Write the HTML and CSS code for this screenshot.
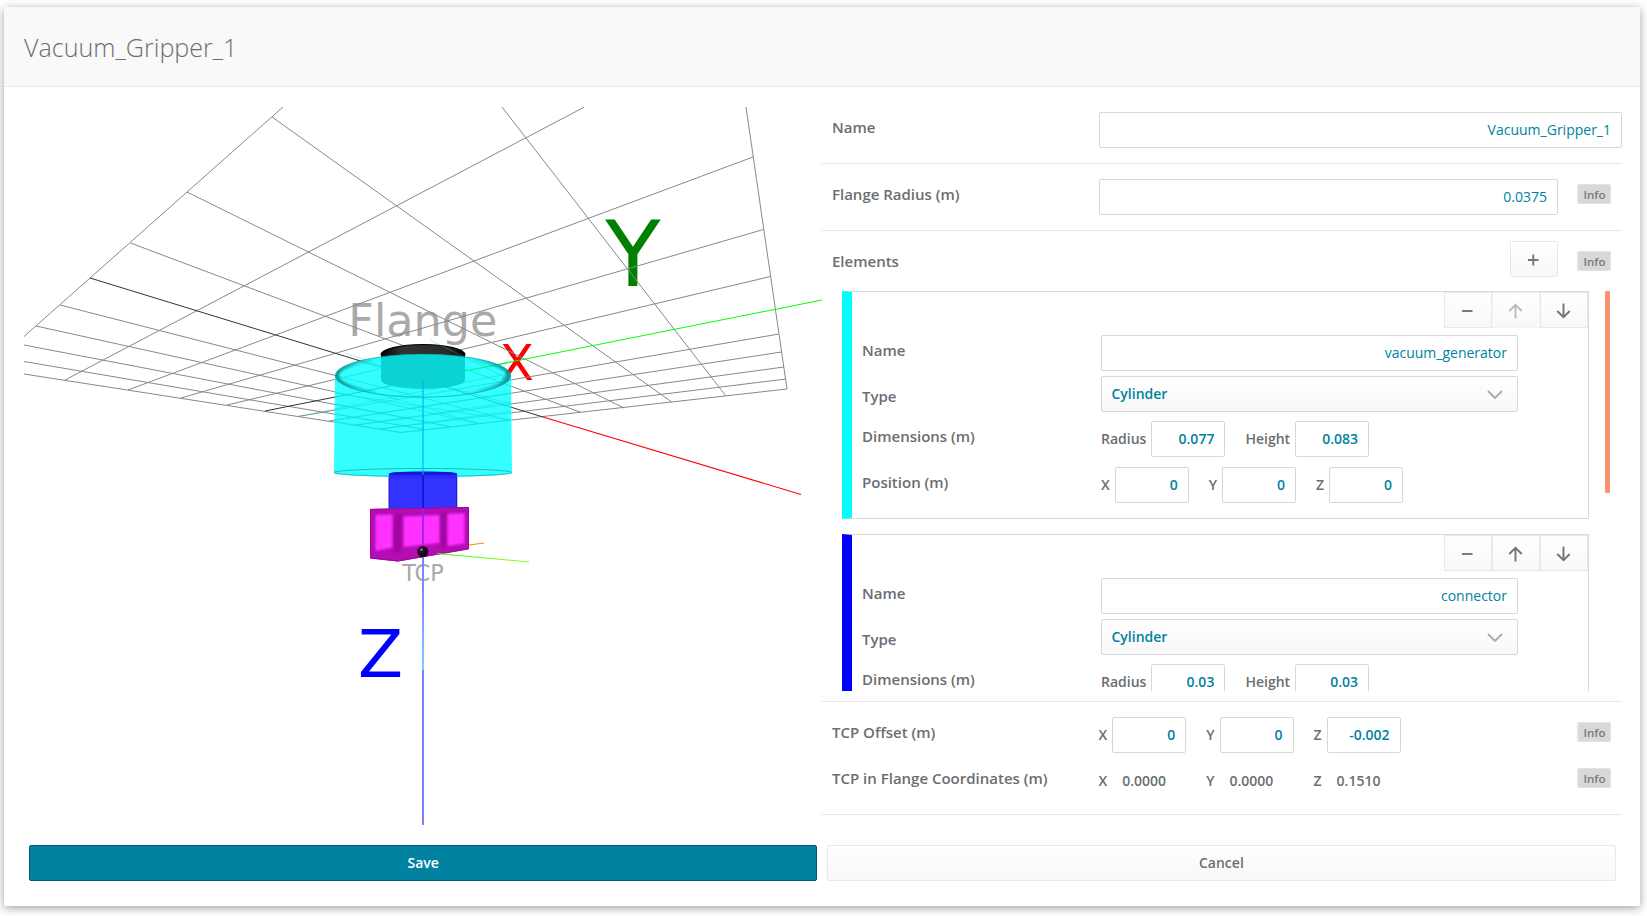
FILE: index.html
```html
<!DOCTYPE html>
<html lang="en">
<head>
<meta charset="utf-8">
<title>Vacuum_Gripper_1</title>
<link rel="stylesheet" href="styles.css">
</head>
<body>
<main class="dialog">
  <header class="dialog-header"><h1 class="title">Vacuum_Gripper_1</h1></header>
  <div class="content">
    <svg class="viewer" viewBox="24 107 798 718">
      <defs>
        <linearGradient id="flangeTop" x1="0" x2="1"><stop offset="0" stop-color="#000"/><stop offset=".25" stop-color="#333"/><stop offset=".8" stop-color="#2a2a2a"/><stop offset="1" stop-color="#000"/></linearGradient>
        <linearGradient id="rim" x1="0" x2="1"><stop offset="0" stop-color="#087c7c" stop-opacity=".8"/><stop offset=".12" stop-color="#087c7c" stop-opacity=".35"/><stop offset=".25" stop-color="#087c7c" stop-opacity="0"/><stop offset=".75" stop-color="#087c7c" stop-opacity="0"/><stop offset=".88" stop-color="#087c7c" stop-opacity=".4"/><stop offset="1" stop-color="#087c7c" stop-opacity=".8"/></linearGradient>
        <linearGradient id="axisZ" x1="0" y1="0" x2="0" y2="1"><stop offset="0" stop-color="#8080ff"/><stop offset=".4" stop-color="#8090ff"/><stop offset="1" stop-color="#80ccff"/></linearGradient>
        <linearGradient id="tcpY" gradientUnits="userSpaceOnUse" x1="440" y1="0" x2="529" y2="0"><stop offset="0" stop-color="#30ff00"/><stop offset="1" stop-color="#90ff20"/></linearGradient>
        <radialGradient id="ball" cx=".38" cy=".32" r=".5"><stop offset="0" stop-color="#d9a0d9"/><stop offset=".3" stop-color="#301030"/><stop offset="1" stop-color="#180018"/></radialGradient>
        <filter id="soft"><feGaussianBlur stdDeviation="1"/></filter>
        <filter id="softer"><feGaussianBlur stdDeviation="1.6"/></filter>
        <clipPath id="opening"><ellipse cx="423" cy="375.7" rx="88" ry="21.7"/></clipPath>
      </defs>

      <g class="scene-text">
        <text class="grey" x="348.3" y="336" font-size="44.5">Flange</text>
        <text class="green" x="633" y="286.3" font-size="90.5" text-anchor="middle">Y</text>
        <text class="red" x="516.8" y="379.7" font-size="50.3" text-anchor="middle">X</text>
        <text class="blue" x="380.5" y="677" font-size="65.8" text-anchor="middle">Z</text>
      </g>

      <g class="grid-lines">
        <path d="M746 107L787 389M502 107L725.7 395.7M272 117L671.7 402M187 192L624 408M130.5 243L581 412.5M60 305L509 420M36 326L478 423.4M24 345L450 426.5M24 361.5L424.4 429.4M24 374L401 432.5"/>
        <path d="M283 107L24 336.5M584.5 107L65 380M753 157L128 390M763.5 229.5L181 398M770.5 276.5L227 405M779 334L299 416.3M781.5 352L329 421M784 367L356 425M786 379L380 429M787 389L401 432.5"/>
      </g>
      <path class="grid-axis" d="M90 278L543 417M265 411L422.7 379.5"/>
      <path class="axis-x" d="M543 417L801 494.5"/>
      <path class="axis-y" d="M422.7 379.5L822 300"/>

      <path d="M381 355v23a42 10.5 0 0 0 84 0v-23z" fill="#111"/>
      <path d="M381 359v-4a42 10.5 0 0 1 84 0v4z" fill="url(#flangeTop)"/>
      <path d="M381 355a42 10.5 0 0 1 84 0" fill="none" stroke="#000" stroke-width="1.2"/>

      <path d="M389 473h68v38h-68z" fill="#33f"/>
      <ellipse cx="423" cy="473.2" rx="34" ry="2" fill="#2020dd"/>
      <path d="M389 473.5v35M456.8 473.5v35" stroke="#1b1bd0" stroke-width="1"/>

      <path d="M335 376A88 22 0 0 1 511 376L512 473A89 4 0 0 1 334 473Z" fill="#0ff" opacity=".8"/>
      <path d="M381 357.500Q423 350.500 465 357.500v22.500a42 9 0 0 1 -84 0z" fill="#0cd4d4"/>
      <g class="seen-through">
        <path d="M335 381L478 423.4M335 393L509 420M335 404L450 426.5M335 414L424.4 429.4M335 421.5L401 432.5L511 420M511 373L299 416.3M511 393L329 421M511 402L356 425M511 411L380 429M511 380L430 340M511 404L423 380L345 353"/>
      </g>
      <path d="M465 371L511 362" stroke="#00ea98" stroke-width="1" opacity=".7"/>
      <g clip-path="url(#opening)"><ellipse cx="423" cy="375.7" rx="86" ry="20.5" fill="none" stroke="url(#rim)" stroke-width="4" filter="url(#soft)"/></g>
      <ellipse cx="423" cy="375.7" rx="87.500" ry="21.5" fill="none" stroke="#0a9c9c" stroke-width=".8" opacity=".8"/>
      <ellipse cx="423" cy="472.5" rx="88.8" ry="4" fill="none" stroke="#1db4b4" stroke-width=".9"/>
      <path d="M389 473.5a34 2 0 0 1 68 0v3h-68z" fill="#1616dc"/>
      <path d="M389 475h68v3h-68z" fill="#2b2bf5"/>

      <path d="M370 509L469 507V549L398 561.5L370 558.5Z" fill="#b30db3"/>
      <path d="M394 514L402 514L401 552L394 552zM440.500 512L446.500 512V548H440.500z" fill="#8c068c" opacity=".5" filter="url(#softer)"/>
      <g fill="#ff33ff" filter="url(#soft)"><path d="M375.500 515L392.500 514.500V547.500L375.500 551z"/><path d="M403.500 516.500L439.500 515V543L403.500 547z"/><path d="M447.5 514L464.5 513V543.5L447.5 546z"/></g>
      <path d="M370.5 558V509.3L468.5 507.4V549L398 561L370.5 558" fill="none" stroke="#9c089c" stroke-width="1"/>
      <path d="M423 380V475" stroke="#00aaff" stroke-width="1.7" opacity=".65"/>
      <path d="M423 475V508" stroke="#1414d6" stroke-width="1.7"/>
      <path d="M423 508V548" stroke="#9a22e6" stroke-width="1.7"/>
      <path d="M469 545L484 543" stroke="#ff841f"/>
      <path d="M437 553.5L529 562" stroke="url(#tcpY)" stroke-width="1.1"/>
      <text class="scene-text grey" x="423" y="580.7" font-size="22.4" text-anchor="middle">TCP</text>
      <rect x="422" y="555" width="2" height="115" fill="url(#axisZ)"/>
      <rect x="422" y="670" width="2" height="155" fill="#8080ff"/>
      <circle cx="422.8" cy="551.7" r="5.6" fill="url(#ball)"/>
    </svg>

    <section class="form">
      <div class="row">
        <span class="label">Name</span>
        <input class="field" value="Vacuum_Gripper_1">
      </div>
      <div class="row with-info">
        <span class="label">Flange Radius (m)</span>
        <input class="field" value="0.0375">
        <button class="info">Info</button>
      </div>
      <div class="row elements-row with-info">
        <span class="label">Elements</span>
        <button class="tool add"><svg viewBox="0 0 48 36"><path d="M18 19h10.500M23.250 13.5v11"/></svg></button>
        <button class="info">Info</button>
      </div>
      <div class="scroller">
        <div class="elements">
          <article class="element cyan">
            <div class="tools">
              <button class="tool"><svg viewBox="0 0 48 36"><path d="M18 19h10.500"/></svg></button>
              <button class="tool disabled"><svg viewBox="0 0 48 36"><path d="M23.500 26.500V12.500M17.250 19l6.250-6.250L29.750 19"/></svg></button>
              <button class="tool"><svg viewBox="0 0 48 36"><path d="M23.500 11.500V25.500M17.250 19l6.250 6.250L29.750 19"/></svg></button>
            </div>
            <div class="line name"><span class="label">Name</span><input class="field" value="vacuum_generator"></div>
            <div class="line type"><span class="label">Type</span><div class="select">Cylinder<svg viewBox="0 0 16 9"><path d="M1 1l7 7 7-7"/></svg></div></div>
            <div class="line dims"><span class="label">Dimensions (m)</span>
              <label class="unit">Radius<input class="field small" value="0.077"></label>
              <label class="unit">Height<input class="field small" value="0.083"></label></div>
            <div class="line pos"><span class="label">Position (m)</span>
              <label class="unit">X<input class="field small" value="0"></label>
              <label class="unit">Y<input class="field small" value="0"></label>
              <label class="unit">Z<input class="field small" value="0"></label></div>
          </article>
          <article class="element blue-bar">
            <div class="tools">
              <button class="tool"><svg viewBox="0 0 48 36"><path d="M18 19h10.500"/></svg></button>
              <button class="tool"><svg viewBox="0 0 48 36"><path d="M23.500 26.500V12.500M17.250 19l6.250-6.250L29.750 19"/></svg></button>
              <button class="tool"><svg viewBox="0 0 48 36"><path d="M23.500 11.500V25.500M17.250 19l6.250 6.250L29.750 19"/></svg></button>
            </div>
            <div class="line name"><span class="label">Name</span><input class="field" value="connector"></div>
            <div class="line type"><span class="label">Type</span><div class="select">Cylinder<svg viewBox="0 0 16 9"><path d="M1 1l7 7 7-7"/></svg></div></div>
            <div class="line dims"><span class="label">Dimensions (m)</span>
              <label class="unit">Radius<input class="field small" value="0.03"></label>
              <label class="unit">Height<input class="field small" value="0.03"></label></div>
          </article>
        </div>
        <div class="scrollbar"></div>
      </div>
      <div class="tcp">
        <div class="tcp-row">
          <span class="label">TCP Offset (m)</span>
          <label class="unit">X<input class="field small" value="0"></label>
          <label class="unit">Y<input class="field small" value="0"></label>
          <label class="unit">Z<input class="field small" value="-0.002"></label>
          <button class="info">Info</button>
        </div>
        <div class="tcp-row">
          <span class="label">TCP in Flange Coordinates (m)</span>
          <span class="unit">X<span class="value">0.0000</span></span>
          <span class="unit">Y<span class="value">0.0000</span></span>
          <span class="unit">Z<span class="value">0.1510</span></span>
          <button class="info">Info</button>
        </div>
      </div>
    </section>
  </div>
  <footer class="actions">
    <button class="action save">Save</button>
    <button class="action">Cancel</button>
  </footer>
</main>
</body>
</html>
```
FILE: styles.css
```css
* { box-sizing: border-box; }
body {
  margin: 0;
  height: 916px;
  padding: 7px 7px 10px 4px;
  overflow: hidden;
  background: #fff;
  color: #6b6e71;
  font: 600 14px/20px "Open Sans", "Noto Sans", sans-serif;
}
button, input { font: inherit; color: inherit; margin: 0; }
.dialog {
  height: 899px;
  background: #fff;
  border-radius: 2px;
  box-shadow: 0 2px 10px rgba(0, 0, 0, .38);
}
.dialog-header {
  height: 80px;
  padding: 22px 20px 0;
  background: #f9f9f9;
  border-bottom: 1px solid #e8e8e8;
}
.title { margin: 0; font-size: 25.1px; line-height: 36px; font-weight: 300; }
.content { display: flex; height: 738px; padding: 20px 18px 0 20px; }
.viewer { width: 798px; height: 718px; flex: none; }
.scene-text { font-family: "DejaVu Sans", sans-serif; font-weight: 400; }
.grey { fill: #a9a9a9; }
.green { fill: #008000; }
.red { fill: #f00; }
.blue { fill: #00f; }
.grid-lines { fill: none; stroke: #888; stroke-width: 1; }
.grid-axis { fill: none; stroke: #333; stroke-width: 1; }
.axis-x { stroke: #f00; stroke-width: 1.1; }
.axis-y { stroke: #0f0; stroke-width: 1.1; }
.seen-through { fill: none; stroke: #14c8c8; stroke-width: .7; opacity: .5; }

.form { width: 800px; }
.row {
  display: flex;
  height: 67px;
  padding: 5px 0 0 10px;
  border-bottom: 1px solid #e8e8e8;
}
.row:first-child { height: 57px; }
.row.with-info { padding: 15px 11px 0 10px; }
.label { flex: none; width: 267px; font-size: 15px; }
.row .label { padding-top: 5px; }
.field {
  flex: 1;
  min-width: 0;
  height: 36px;
  padding: 0 10px 2px;
  border: 1px solid #d8d8d8;
  border-radius: 2px;
  background: #fff;
  color: #0082a0;
  font-weight: 400;
  text-align: right;
}
.small { flex: none; width: 74px; font-weight: 600; }
.info {
  width: 34px;
  height: 20px;
  margin: 5px 0 0 19px;
  padding: 0;
  border: 1px solid #e3e3e3;
  border-left-width: 2px;
  background: #d8d8d8;
  color: #77797b;
  font-size: 11.5px;
  line-height: 19px;
  border-radius: 2px;
}
.row.elements-row { height: 60px; padding-top: 10px; border: 0; }
.elements-row .label { padding-top: 10px; }
.elements-row .info { margin-top: 10px; }
.tool {
  width: 48px;
  height: 36px;
  padding: 0;
  border: 1px solid #e8e8e8;
  background: linear-gradient(#fff, #f8f8f8);
}
.add { margin-left: auto; border-radius: 2px; }
.tool svg { display: block; width: 48px; height: 36px; margin: -1px; }
.tool path { fill: none; stroke: #747474; stroke-width: 1.9; }
.tool.disabled { border-color: #f3f3f3; }
.tool.disabled path { stroke: #b9b9b9; }

.scroller {
  display: flex;
  gap: 16px;
  height: 400px;
  padding-left: 20px;
  overflow: hidden;
}
.elements { width: 747px; }
.element {
  height: 228px;
  margin-bottom: 15px;
  border: 1px solid #d8d8d8;
  border-left: 10px solid #0ff;
}
.cyan { border-left-color: #0ff; }
.blue-bar { border-left-color: #00f; }
.tools { display: flex; justify-content: flex-end; height: 36px; }
.line { display: flex; padding: 0 70px 0 10px; }
.line .label { width: 239px; }
.name { margin-top: 7px; }
.name .label { padding-top: 5px; }
.type { margin-top: 5px; }
.type .label { padding-top: 10px; }
.dims { margin-top: 9px; }
.dims .label, .pos .label { padding-top: 5px; }
.pos { margin-top: 10px; }
.scrollbar { width: 5px; height: 202px; background: #f5936b; border-radius: 1px; }
.select {
  display: flex;
  flex: 1;
  justify-content: space-between;
  align-items: center;
  height: 36px;
  padding: 0 14.5px 1px 9.5px;
  border: 1px solid #d8d8d8;
  border-radius: 2px;
  background: linear-gradient(#fff, #f8f8f8);
  color: #0082a0;
}
.select svg { width: 16px; height: 9px; margin-top: 2px; fill: none; stroke: #abadb3; stroke-width: 2; }
.unit { display: flex; align-items: center; gap: 5px; margin-right: 20px; height: 36px; }
.tcp {
  height: 114px;
  margin-top: 10px;
  padding: 15px 11px 0 10px;
  border-top: 1px solid #e8e8e8;
  border-bottom: 1px solid #e8e8e8;
}
.tcp-row { display: flex; height: 46px; }
.tcp-row .label { width: 266.5px; padding-top: 5px; }
.tcp-row .info { margin-left: auto; }
.value { width: 74px; padding-left: 10px; }

.actions { display: flex; gap: 10px; padding: 20px 24.5px 0 25px; }
.action {
  flex: 1;
  height: 36px;
  border: 1px solid #e8e8e8;
  border-radius: 2px;
  background: linear-gradient(#fff, #f8f8f8);
  padding: 0;
}
.save { border-color: #005a70; background: #0082a0; color: #fff; }
```
